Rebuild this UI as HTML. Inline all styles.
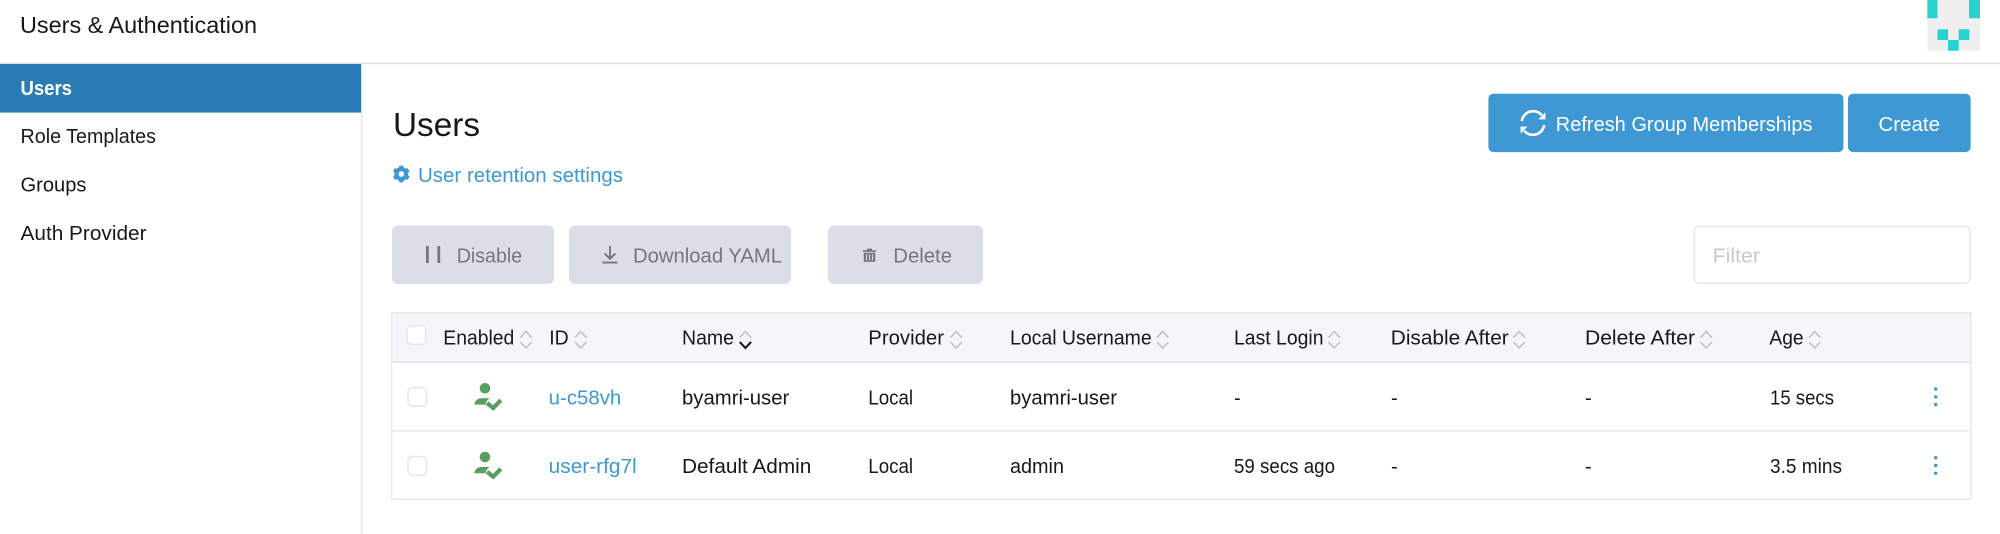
<!DOCTYPE html>
<html lang="en"><head><meta charset="utf-8"><title>Users &amp; Authentication</title>
<style>
html,body{margin:0;padding:0;background:#fff;width:2000px;height:534px;overflow:hidden}
svg{display:block}
text{font-family:"Liberation Sans",sans-serif;font-size:20px;fill:#17171c}
.m{fill:#73757f}
.l{fill:#3d98d3}
.w{fill:#fff}
</style></head><body>
<svg xmlns="http://www.w3.org/2000/svg" width="2000" height="534" viewBox="0 0 2000 534">
<defs>
<g id="sort" fill="none" stroke="#c5c7cd" stroke-width="1.7"><path d="M1 7.5 6.7 1.5 12.4 7.5"/><path d="M1 12 6.7 18 12.4 12"/></g>
<g id="enabled"><circle cx="485" cy="388.3" r="5.3" fill="#5a9e5f"/><path d="M474.2 404.6C475 400.6 477.5 398.6 480.5 398.3H490C487.5 399.6 486 402 485.5 404.6Z" fill="#5a9e5f"/><path d="M487 403 493.2 408 500.8 400.2" fill="none" stroke="#5a9e5f" stroke-width="4.2"/></g>
<g id="kebab" fill="#3d98d3"><circle cx="1935.7" cy="389" r="1.7"/><circle cx="1935.7" cy="396.8" r="1.7"/><circle cx="1935.7" cy="404.6" r="1.7"/></g>
</defs>

<rect x="0" y="62.5" width="2000" height="1.6" fill="#e2e4ea"/>
<text x="20" y="33" style="font-size:23px" textLength="237" lengthAdjust="spacingAndGlyphs">Users &amp; Authentication</text>

<rect x="1927.3" y="0" width="52.7" height="50.7" fill="#efefef"/>
<g fill="#25d4cc"><rect x="1927.3" y="0" width="10.2" height="18.3"/><rect x="1969" y="0" width="11" height="18.3"/><rect x="1937.5" y="29.3" width="10.6" height="10.7"/><rect x="1958.7" y="29.3" width="10.6" height="10.7"/><rect x="1948" y="40" width="10.7" height="10.7"/></g>

<rect x="361" y="64" width="1.6" height="470" fill="#e6e8ed"/>
<rect x="0" y="64" width="361" height="48.6" fill="#2b7cb4"/>
<text class="w" x="20.5" y="95" font-weight="700" textLength="51.5" lengthAdjust="spacingAndGlyphs">Users</text>
<text x="20.5" y="143" textLength="135.5" lengthAdjust="spacingAndGlyphs">Role Templates</text>
<text x="20.5" y="191.5" textLength="66" lengthAdjust="spacingAndGlyphs">Groups</text>
<text x="20.5" y="240" textLength="126" lengthAdjust="spacingAndGlyphs">Auth Provider</text>

<text x="393" y="136" style="font-size:33px" textLength="87" lengthAdjust="spacingAndGlyphs">Users</text>
<g fill="none" stroke="#3d98d3"><circle cx="401.3" cy="174" r="4.9" stroke-width="4.2"/><path stroke-width="4" d="M401.3 165.6v3.4M401.3 179v3.4M394 169.8l3 1.7M405.6 176.5l3 1.7M394 178.2l3-1.7M405.6 171.5l3-1.7"/></g>
<text class="l" x="418" y="182" textLength="205" lengthAdjust="spacingAndGlyphs">User retention settings</text>

<rect x="1488.4" y="93.7" width="355" height="58.4" rx="5" fill="#3d98d3"/>
<rect x="1848" y="93.7" width="122.6" height="58.4" rx="5" fill="#3d98d3"/>
<g fill="none" stroke="#fff" stroke-width="2.6"><path d="M1521.8 121a11.4 11.4 0 0 1 20-5.8"/><path d="M1544.2 125a11.4 11.4 0 0 1-20 5.8"/></g>
<path d="M1545.4 112.4v7h-7zM1520.6 133.6v-7h7z" fill="#fff"/>
<text class="w" x="1555.8" y="131" textLength="256.7" lengthAdjust="spacingAndGlyphs">Refresh Group Memberships</text>
<text class="w" x="1878.4" y="131" textLength="61.6" lengthAdjust="spacingAndGlyphs">Create</text>

<rect x="392" y="225.5" width="162" height="58.5" rx="6" fill="#dcdee7"/>
<rect x="569" y="225.5" width="222" height="58.5" rx="6" fill="#dcdee7"/>
<rect x="828" y="225.5" width="155" height="58.5" rx="6" fill="#dcdee7"/>
<rect x="426" y="246" width="2.8" height="17" fill="#73757f"/><rect x="437.4" y="246" width="2.8" height="17" fill="#73757f"/>
<text class="m" x="456.7" y="262.7" textLength="65.5" lengthAdjust="spacingAndGlyphs">Disable</text>
<g fill="none" stroke="#73757f" stroke-width="1.9"><path d="M610 246v12.5M604.6 253.4 610 258.8 615.4 253.4M602.5 262.6h15"/></g>
<text class="m" x="633" y="262.7" textLength="149" lengthAdjust="spacingAndGlyphs">Download YAML</text>
<path d="M867 250.2v-1.6h5v1.6h4.2v1.7h-13.4v-1.7zM863.8 252.8h11.4v9h-11.4zM866 254.4v5.8h1.1v-5.8zM869 254.4v5.8h1.1v-5.8zM871.9 254.4v5.8h1.1v-5.8z" fill="#73757f" fill-rule="evenodd"/>
<text class="m" x="893.3" y="262.7" textLength="58.7" lengthAdjust="spacingAndGlyphs">Delete</text>

<rect x="1694.2" y="226.4" width="275.8" height="56.8" rx="5" fill="#fff" stroke="#e7e8ec" stroke-width="1.6"/>
<text x="1712.7" y="262.7" style="fill:#c6c8ce" textLength="47.3" lengthAdjust="spacingAndGlyphs">Filter</text>

<rect x="392" y="313" width="1578.6" height="186.4" fill="#fff"/>
<rect x="392" y="313" width="1578.6" height="48.5" fill="#f4f6f9"/>
<rect x="392" y="361" width="1578.6" height="2" fill="#e5e7ec"/>
<rect x="392" y="430" width="1578.6" height="1.6" fill="#e9eaee"/>
<rect x="391.8" y="312.8" width="1579" height="186.6" fill="none" stroke="#e6e8ec" stroke-width="1.4"/>

<g fill="#fff" stroke="#e6e8ec" stroke-width="1.6"><rect x="407.2" y="325.8" width="18.6" height="18.6" rx="4.5"/><rect x="408" y="387.6" width="18.6" height="18.6" rx="4.5"/><rect x="408" y="456.6" width="18.6" height="18.6" rx="4.5"/></g>

<text x="443.3" y="344.3" textLength="71" lengthAdjust="spacingAndGlyphs">Enabled</text><use href="#sort" x="519.3" y="330"/>
<text x="549.3" y="344.3" textLength="19.4" lengthAdjust="spacingAndGlyphs">ID</text><use href="#sort" x="574" y="330"/>
<text x="682" y="344.3" textLength="52" lengthAdjust="spacingAndGlyphs">Name</text><g transform="translate(738.7 330)"><path d="M1 7.5 6.7 1.5 12.4 7.5" fill="none" stroke="#c5c7cd" stroke-width="1.7"/><path d="M1 12 6.7 18 12.4 12" fill="none" stroke="#17171c" stroke-width="2"/></g>
<text x="868.3" y="344.3" textLength="75.7" lengthAdjust="spacingAndGlyphs">Provider</text><use href="#sort" x="949.5" y="330"/>
<text x="1010" y="344.3" textLength="141.7" lengthAdjust="spacingAndGlyphs">Local Username</text><use href="#sort" x="1156" y="330"/>
<text x="1234" y="344.3" textLength="89.5" lengthAdjust="spacingAndGlyphs">Last Login</text><use href="#sort" x="1327.5" y="330"/>
<text x="1390.8" y="344.3" textLength="117.9" lengthAdjust="spacingAndGlyphs">Disable After</text><use href="#sort" x="1512.5" y="330"/>
<text x="1585" y="344.3" textLength="110" lengthAdjust="spacingAndGlyphs">Delete After</text><use href="#sort" x="1699.5" y="330"/>
<text x="1769.4" y="344.3" textLength="34.2" lengthAdjust="spacingAndGlyphs">Age</text><use href="#sort" x="1808" y="330"/>

<use href="#enabled"/>
<text class="l" x="548.7" y="404.5" textLength="72.6" lengthAdjust="spacingAndGlyphs">u-c58vh</text>
<text x="682" y="404.5" textLength="107.3" lengthAdjust="spacingAndGlyphs">byamri-user</text>
<text x="868.3" y="404.5" textLength="44.7" lengthAdjust="spacingAndGlyphs">Local</text>
<text x="1010" y="404.5" textLength="107" lengthAdjust="spacingAndGlyphs">byamri-user</text>
<text x="1234" y="404.5">-</text><text x="1391" y="404.5">-</text><text x="1585" y="404.5">-</text>
<text x="1770" y="404.5" textLength="64" lengthAdjust="spacingAndGlyphs">15 secs</text>
<use href="#kebab"/>

<use href="#enabled" y="68.7"/>
<text class="l" x="548.7" y="472.8" textLength="88" lengthAdjust="spacingAndGlyphs">user-rfg7l</text>
<text x="682" y="472.8" textLength="129.3" lengthAdjust="spacingAndGlyphs">Default Admin</text>
<text x="868.3" y="472.8" textLength="44.7" lengthAdjust="spacingAndGlyphs">Local</text>
<text x="1010" y="472.8" textLength="54" lengthAdjust="spacingAndGlyphs">admin</text>
<text x="1234" y="472.8" textLength="101" lengthAdjust="spacingAndGlyphs">59 secs ago</text>
<text x="1391" y="472.8">-</text><text x="1585" y="472.8">-</text>
<text x="1770" y="472.8" textLength="72" lengthAdjust="spacingAndGlyphs">3.5 mins</text>
<use href="#kebab" y="68.7"/>
</svg>
</body></html>
